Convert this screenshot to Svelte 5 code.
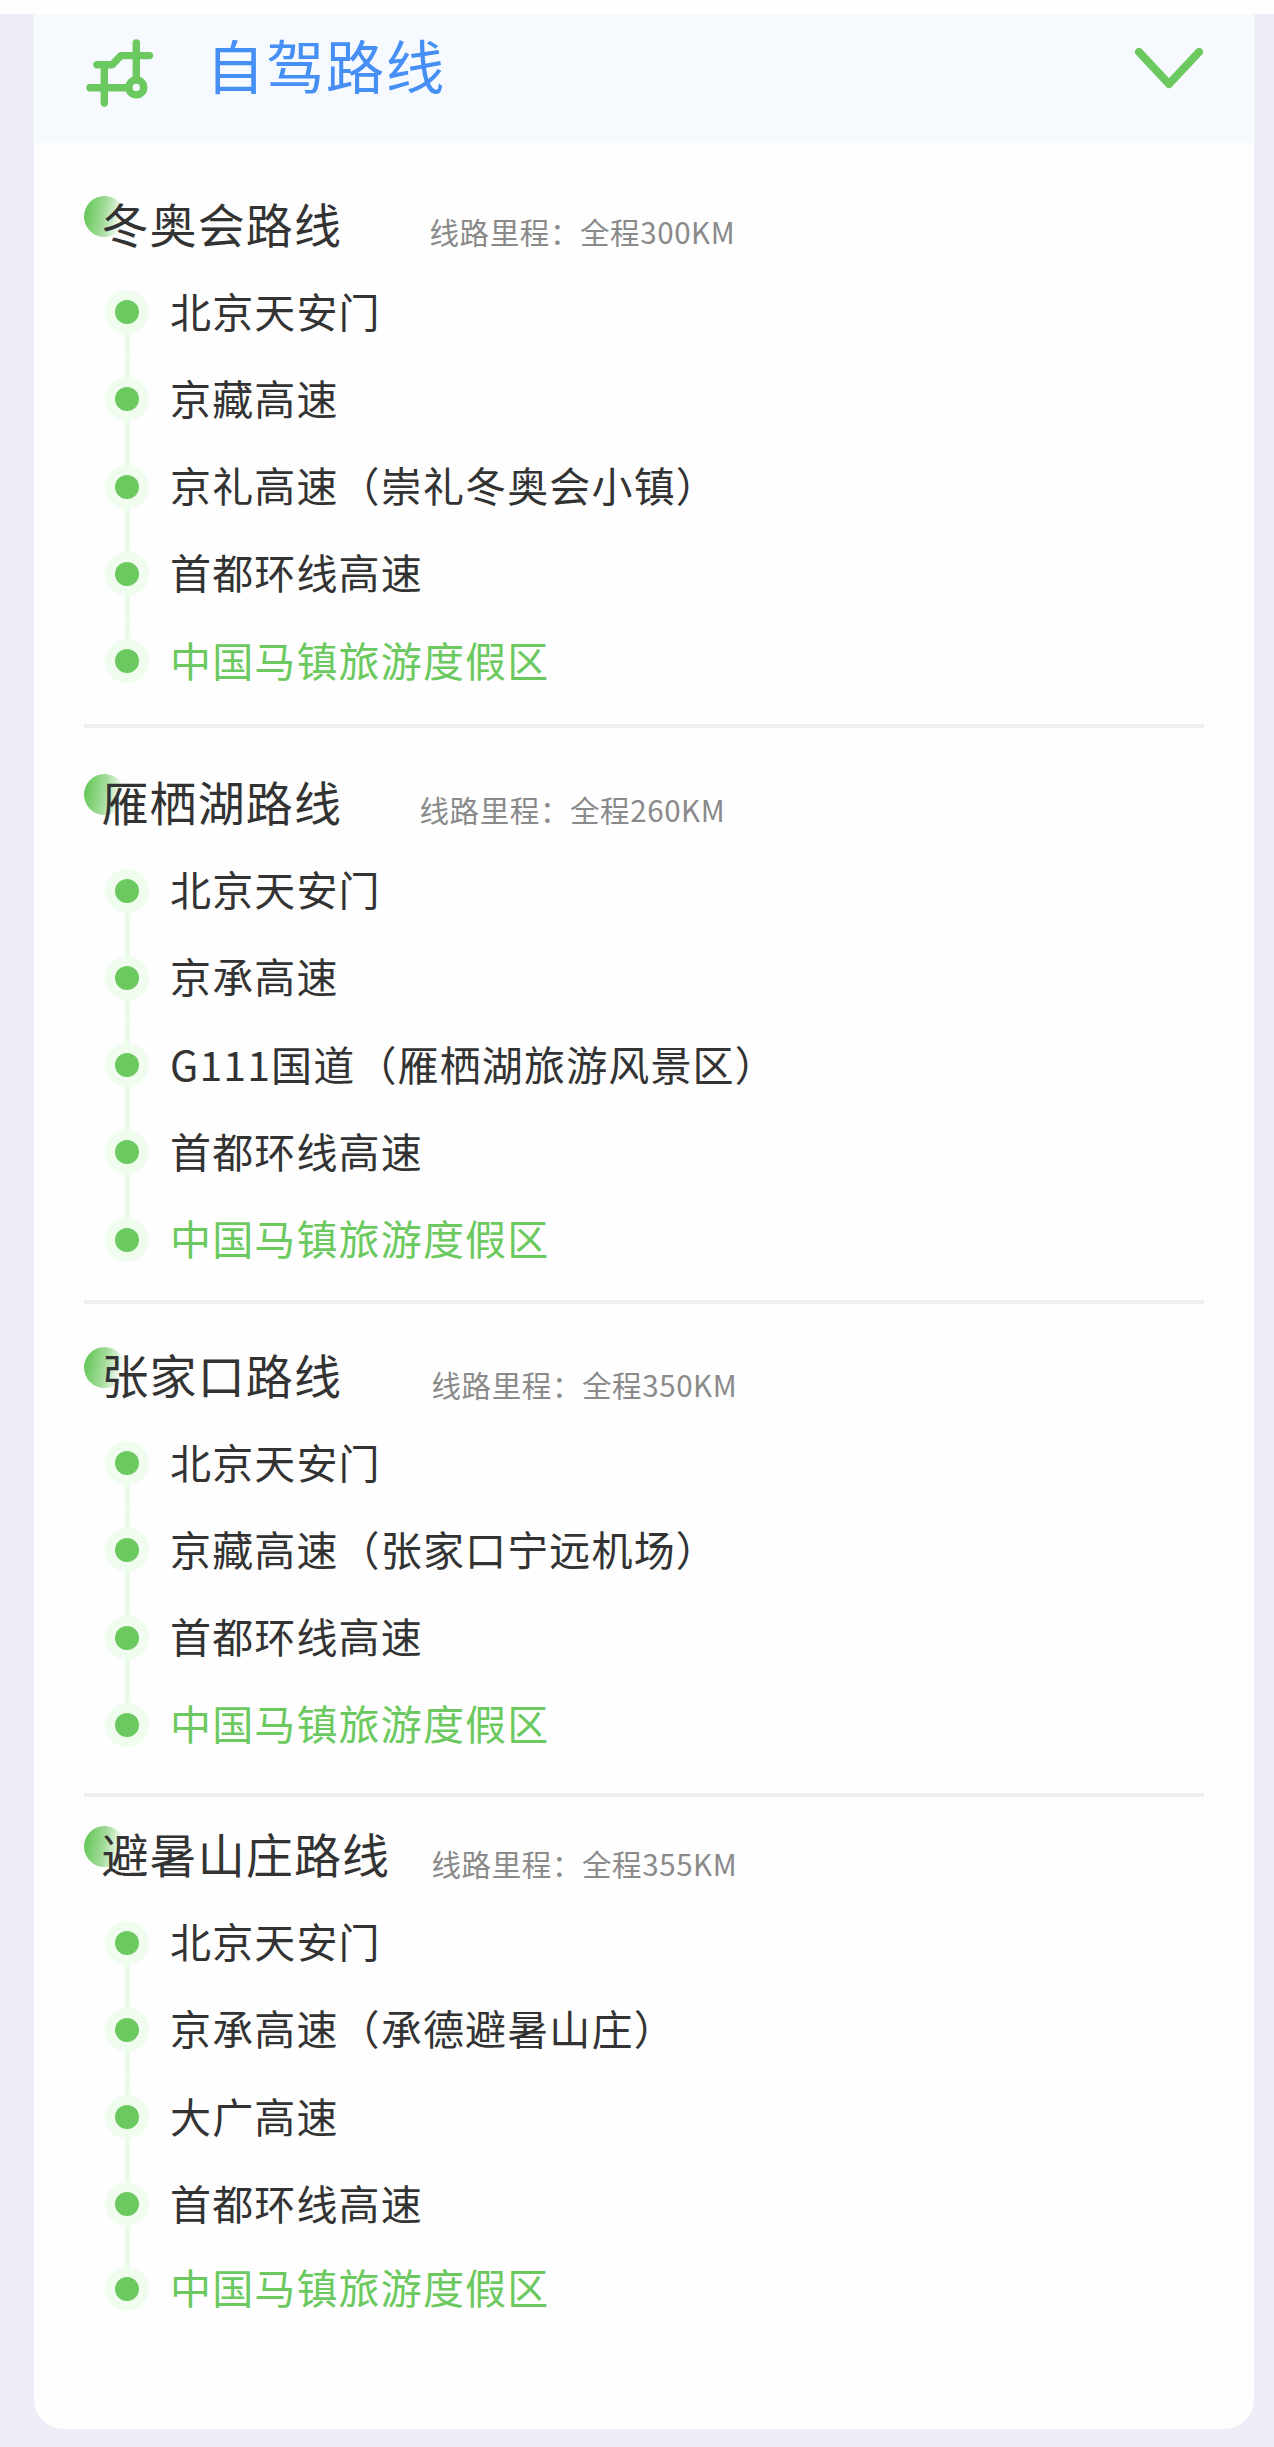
<script>
  const destination = '中国马镇旅游度假区';
  const routes = [
    {
      key: 'olympic',
      name: '冬奥会路线',
      distance: '线路里程：全程300KM',
      stops: ['北京天安门', '京藏高速', '京礼高速（崇礼冬奥会小镇）', '首都环线高速', destination]
    },
    {
      key: 'lake',
      name: '雁栖湖路线',
      distance: '线路里程：全程260KM',
      stops: ['北京天安门', '京承高速', 'G111国道（雁栖湖旅游风景区）', '首都环线高速', destination]
    },
    {
      key: 'zhangjiakou',
      name: '张家口路线',
      distance: '线路里程：全程350KM',
      stops: ['北京天安门', '京藏高速（张家口宁远机场）', '首都环线高速', destination]
    },
    {
      key: 'resort',
      name: '避暑山庄路线',
      distance: '线路里程：全程355KM',
      stops: ['北京天安门', '京承高速（承德避暑山庄）', '大广高速', '首都环线高速', destination]
    }
  ];
</script>

<div class="page">
  <main class="card">
    <header>
      <svg class="route-icon" viewBox="0 0 68 68" fill="none" stroke="#6cc95f" stroke-width="7.4" stroke-linecap="round" stroke-linejoin="round">
        <path d="M50.3 4V39M63.5 16.6H35L26 25.8H11M18.3 26V64M4 48.7H40" />
        <circle cx="50.3" cy="48.4" r="7.4" />
      </svg>
      <h1>自驾路线</h1>
      <svg class="chevron" viewBox="0 0 70 42" fill="none" stroke="#6cc95f" stroke-width="8" stroke-linecap="round" stroke-linejoin="round">
        <path d="M5 5L35 37L65 5" />
      </svg>
    </header>

    <div class="routes">
      {#each routes as route}
        <section class={route.key}>
          <div class="title">
            <h2>{route.name}</h2>
            <span class="distance">{route.distance}</span>
          </div>
          <ol>
            {#each route.stops as stop}
              <li class:goal={stop === destination}>
                <span class="track"><i class="dot"></i></span>
                <span>{stop}</span>
              </li>
            {/each}
          </ol>
        </section>
      {/each}
    </div>
  </main>
</div>

<style>
  :global(body) {
    background: #eeeef8;
  }

  .page {
    box-sizing: border-box;
    height: 2447px;
    padding: 0 20px 18px 34px;
    border-top: 14px solid #fefefe;
    background: #eeeef8;
    font-family: 'Noto Sans CJK SC', sans-serif;
    color: #333333;
  }

  .card {
    height: 2415px;
    border-radius: 0 0 30px 30px;
    background: #fefefe;
    overflow: hidden;
  }

  header {
    display: flex;
    box-sizing: border-box;
    height: 129px;
    padding: 0 50px 0 52px;
    background: #f6f9fe;
  }

  .route-icon {
    width: 68px;
    height: 68px;
    margin-top: 25px;
  }

  h1 {
    margin: 7px 0 0 52px;
    font-size: 58.5px;
    line-height: 86px;
    font-weight: 400;
    letter-spacing: 1.4px;
    color: #468ff5;
  }

  .chevron {
    width: 70px;
    height: 42px;
    margin: 33px 0 0 auto;
  }

  .routes {
    padding: 0 50px;
  }

  section {
    box-sizing: border-box;
    border-bottom: 4px solid #eeeeee;
  }

  .olympic {
    height: 585px;
    padding-top: 38.5px;
  }

  .lake {
    height: 576px;
    padding-top: 32px;
  }

  .zhangjiakou {
    height: 492.5px;
    padding-top: 28.5px;
  }

  .resort {
    padding-top: 15.5px;
    border-bottom: 0;
  }

  .title {
    display: flex;
    position: relative;
    height: 87px;
    padding-left: 17.5px;
    line-height: 82px;
    white-space: nowrap;
  }

  .title::before {
    content: '';
    position: absolute;
    left: 0;
    top: 14px;
    width: 41px;
    height: 41px;
    border-radius: 50%;
    background: linear-gradient(100deg, #6cc95f 12%, #a5dd9d 50%, #ffffff 88%);
  }

  h2 {
    position: relative;
    width: 328px;
    margin: 0;
    font-size: 47px;
    font-weight: 400;
    letter-spacing: 1.1px;
  }

  .lake h2 {
    width: 318px;
  }

  .zhangjiakou h2,
  .resort h2 {
    width: 330px;
  }

  .distance {
    padding-top: 8px;
    font-size: 29.5px;
    letter-spacing: 0.6px;
    color: #8a8a8a;
  }

  .zhangjiakou .distance,
  .resort .distance {
    padding-top: 10px;
  }

  ol {
    margin: 0;
    padding: 0;
    list-style: none;
  }

  li {
    display: flex;
    height: 87.25px;
    padding-left: 20px;
    font-size: 41px;
    line-height: 82px;
    letter-spacing: 1.15px;
    white-space: nowrap;
  }

  .resort .goal {
    height: 81px;
    line-height: 76px;
  }

  .goal {
    color: #6cc95f;
  }

  .track {
    display: flex;
    align-items: center;
    justify-content: center;
    width: 46px;
    margin-right: 20px;
    background: linear-gradient(#ebfbe9, #ebfbe9) center / 5px 100% no-repeat;
  }

  li:first-child .track {
    background-position: center bottom;
    background-size: 5px 50%;
  }

  .goal .track {
    background-position: center top;
    background-size: 5px 50%;
  }

  .dot {
    width: 24px;
    height: 24px;
    border-radius: 50%;
    background: #6cc95f;
    box-shadow: 0 0 2px 10px #effcee;
  }
</style>
